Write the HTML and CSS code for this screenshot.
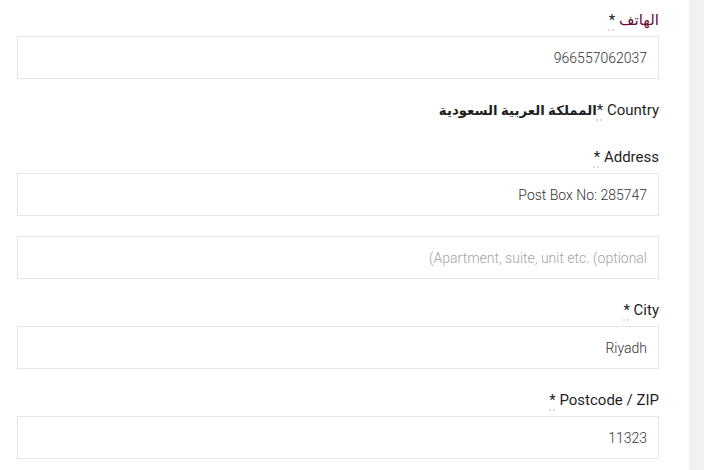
FILE: index.html
```html
<!DOCTYPE html>
<html lang="ar">
<head>
<meta charset="utf-8">
<title>Billing details</title>
<link rel="stylesheet" href="styles.css">
</head>
<body>
<div class="page">
  <main class="content" dir="rtl">
    <div class="field">
      <label class="label"><span class="ar-label">الهاتف</span> <abbr class="required" title="required">*</abbr></label>
      <input class="input" type="text" value="966557062037" dir="rtl">
    </div>

    <div class="country-row">
      <span class="label-inline">Country <abbr class="required" title="required">*</abbr></span><strong class="country-value">المملكة العربية السعودية</strong>
    </div>

    <div class="field">
      <label class="label">Address <abbr class="required" title="required">*</abbr></label>
      <input class="input" type="text" value="Post Box No: 285747" dir="rtl">
    </div>

    <div class="field">
      <input class="input" type="text" placeholder="&#x200F;Apartment, suite, unit etc. (optional&#x2067;)&#x2069;" dir="rtl">
    </div>

    <div class="field">
      <label class="label">City <abbr class="required" title="required">*</abbr></label>
      <input class="input" type="text" value="Riyadh" dir="rtl">
    </div>

    <div class="field">
      <label class="label">Postcode / ZIP <abbr class="required" title="required">*</abbr></label>
      <input class="input" type="text" value="11323" dir="rtl">
    </div>
  </main>
  <aside class="sidebar"></aside>
</div>
</body>
</html>
```

FILE: styles.css
```css
* {
  box-sizing: border-box;
}

html, body {
  margin: 0;
  padding: 0;
  height: 100%;
  background: #ffffff;
}

body {
  font-family: Roboto, "DejaVu Sans", sans-serif;
  color: #1f1f1f;
  overflow: hidden;
}

.page {
  display: flex;
  height: 100vh;
}

.content {
  width: 689px;
  flex: none;
  padding: 9px 30px 0 17px;
  background: #ffffff;
}

.sidebar {
  flex: 1;
  background: #f1f1f1;
}

.field {
  margin-bottom: 20px;
}

.label {
  display: block;
  font-size: 15px;
  line-height: 22px;
  margin-bottom: 5px;
  color: #1f1f1f;
}

.ar-label {
  color: #650c3a;
}

.required {
  text-decoration: underline dotted #cfcfcf;
  text-underline-offset: 5px;
  color: #222;
  cursor: help;
}

.input {
  display: block;
  width: 100%;
  height: 43px;
  border: 1px solid #e6e6e6;
  border-radius: 0;
  padding: 0 11px;
  margin: 0;
  font-family: Roboto, sans-serif;
  font-size: 14px;
  font-weight: 300;
  color: #333333;
  background: #ffffff;
  direction: rtl;
  text-align: right;
  outline: none;
}

.input::placeholder {
  color: #a3a3a3;
  opacity: 1;
}

.country-row {
  font-size: 15px;
  line-height: 22px;
  height: 22px;
  margin-bottom: 25px;
}

.country-value {
  font-weight: 700;
  font-size: 13.3px;
  line-height: 1;
}
```
